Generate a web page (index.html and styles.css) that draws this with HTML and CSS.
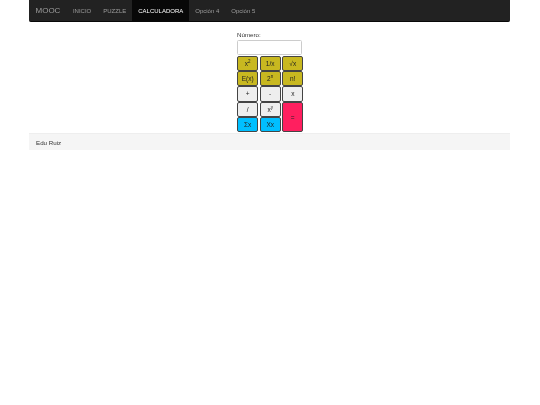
FILE: index.html
```html
<!DOCTYPE html>
<html lang="es">
<head>
    <meta charset="UTF-8">
    <title>Calculadora</title>
    <link rel="stylesheet" href="styles.css">
</head>
<body>
    <nav class="navbar">
        <a class="brand" href="#">MOOC</a>
        <a class="nav-link" href="#">INICIO</a>
        <a class="nav-link" href="#">PUZZLE</a>
        <a class="nav-link active" href="#">CALCULADORA</a>
        <a class="nav-link" href="#">Opción 4</a>
        <a class="nav-link" href="#">Opción 5</a>
    </nav>

    <main class="calc">
        <label class="calc-label" for="numero">Número:</label>
        <input class="calc-input" id="numero" type="text">
        <div class="keys">
            <button class="key yellow">x<sup>2</sup></button>
            <button class="key yellow">1/x</button>
            <button class="key yellow">√x</button>
            <button class="key yellow">E(x)</button>
            <button class="key yellow">2<sup>n</sup></button>
            <button class="key yellow">n!</button>
            <button class="key">+</button>
            <button class="key">-</button>
            <button class="key">x</button>
            <button class="key">/</button>
            <button class="key">x<sup>y</sup></button>
            <button class="key pink equals">=</button>
            <button class="key blue">Σx</button>
            <button class="key blue">Xx</button>
        </div>
    </main>

    <footer class="footer">Edu Ruiz</footer>
</body>
</html>
```

FILE: styles.css
```css
body {
    margin: 0;
    background: #fff;
    font-family: "Liberation Sans", Arial, sans-serif;
    color: #333;
}

.navbar {
    display: flex;
    align-items: stretch;
    height: 22px;
    margin: 0 30px 0 29px;
    background: #222;
    border-bottom: 1px solid #080808;
    border-radius: 0 0 2px 2px;
    box-sizing: border-box;
    will-change: transform;
}
.brand {
    padding: 0 6.5px;
    font-size: 8px;
    line-height: 22px;
    color: #9d9d9d;
    text-decoration: none;
}
.nav-link {
    padding: 0 6px;
    font-size: 6px;
    line-height: 22px;
    color: #9d9d9d;
    text-decoration: none;
}
.nav-link.active {
    background: #080808;
    color: #fff;
}

.calc {
    width: 67px;
    margin: 0 auto;
    padding-top: 9px;
    height: 111px;
    box-sizing: border-box;
    will-change: transform;
}
.calc-label {
    display: block;
    font-size: 6.2px;
    line-height: 8.5px;
}
.calc-input {
    display: block;
    width: 65px;
    height: 15.5px;
    box-sizing: border-box;
    margin: 0 0 0.5px;
    padding: 0;
    border: 1px solid #ccc;
    border-radius: 1.5px;
    background: #fff;
}

.keys {
    display: grid;
    grid-template-columns: repeat(3, 21.2px);
    grid-auto-rows: 15.4px;
    column-gap: 1.4px;
}
.key {
    margin: 0;
    padding: 0;
    font-family: inherit;
    font-size: 6.5px;
    color: #222;
    border: 1px solid #444;
    border-radius: 2px;
    background: #eee;
}
.key sup {
    font-size: 4.5px;
    line-height: 0;
}
.yellow { background: #c8b820; }
.blue { background: #00bfff; }
.pink { background: #ff1f5f; }
.equals { grid-row: span 2; }

.footer {
    height: 17px;
    margin: 0 30px 0 29px;
    padding: 0 7px;
    background: #f5f5f5;
    border-top: 1px solid #eee;
    box-sizing: border-box;
    font-size: 6.2px;
    line-height: 17px;
    will-change: transform;
}
```
